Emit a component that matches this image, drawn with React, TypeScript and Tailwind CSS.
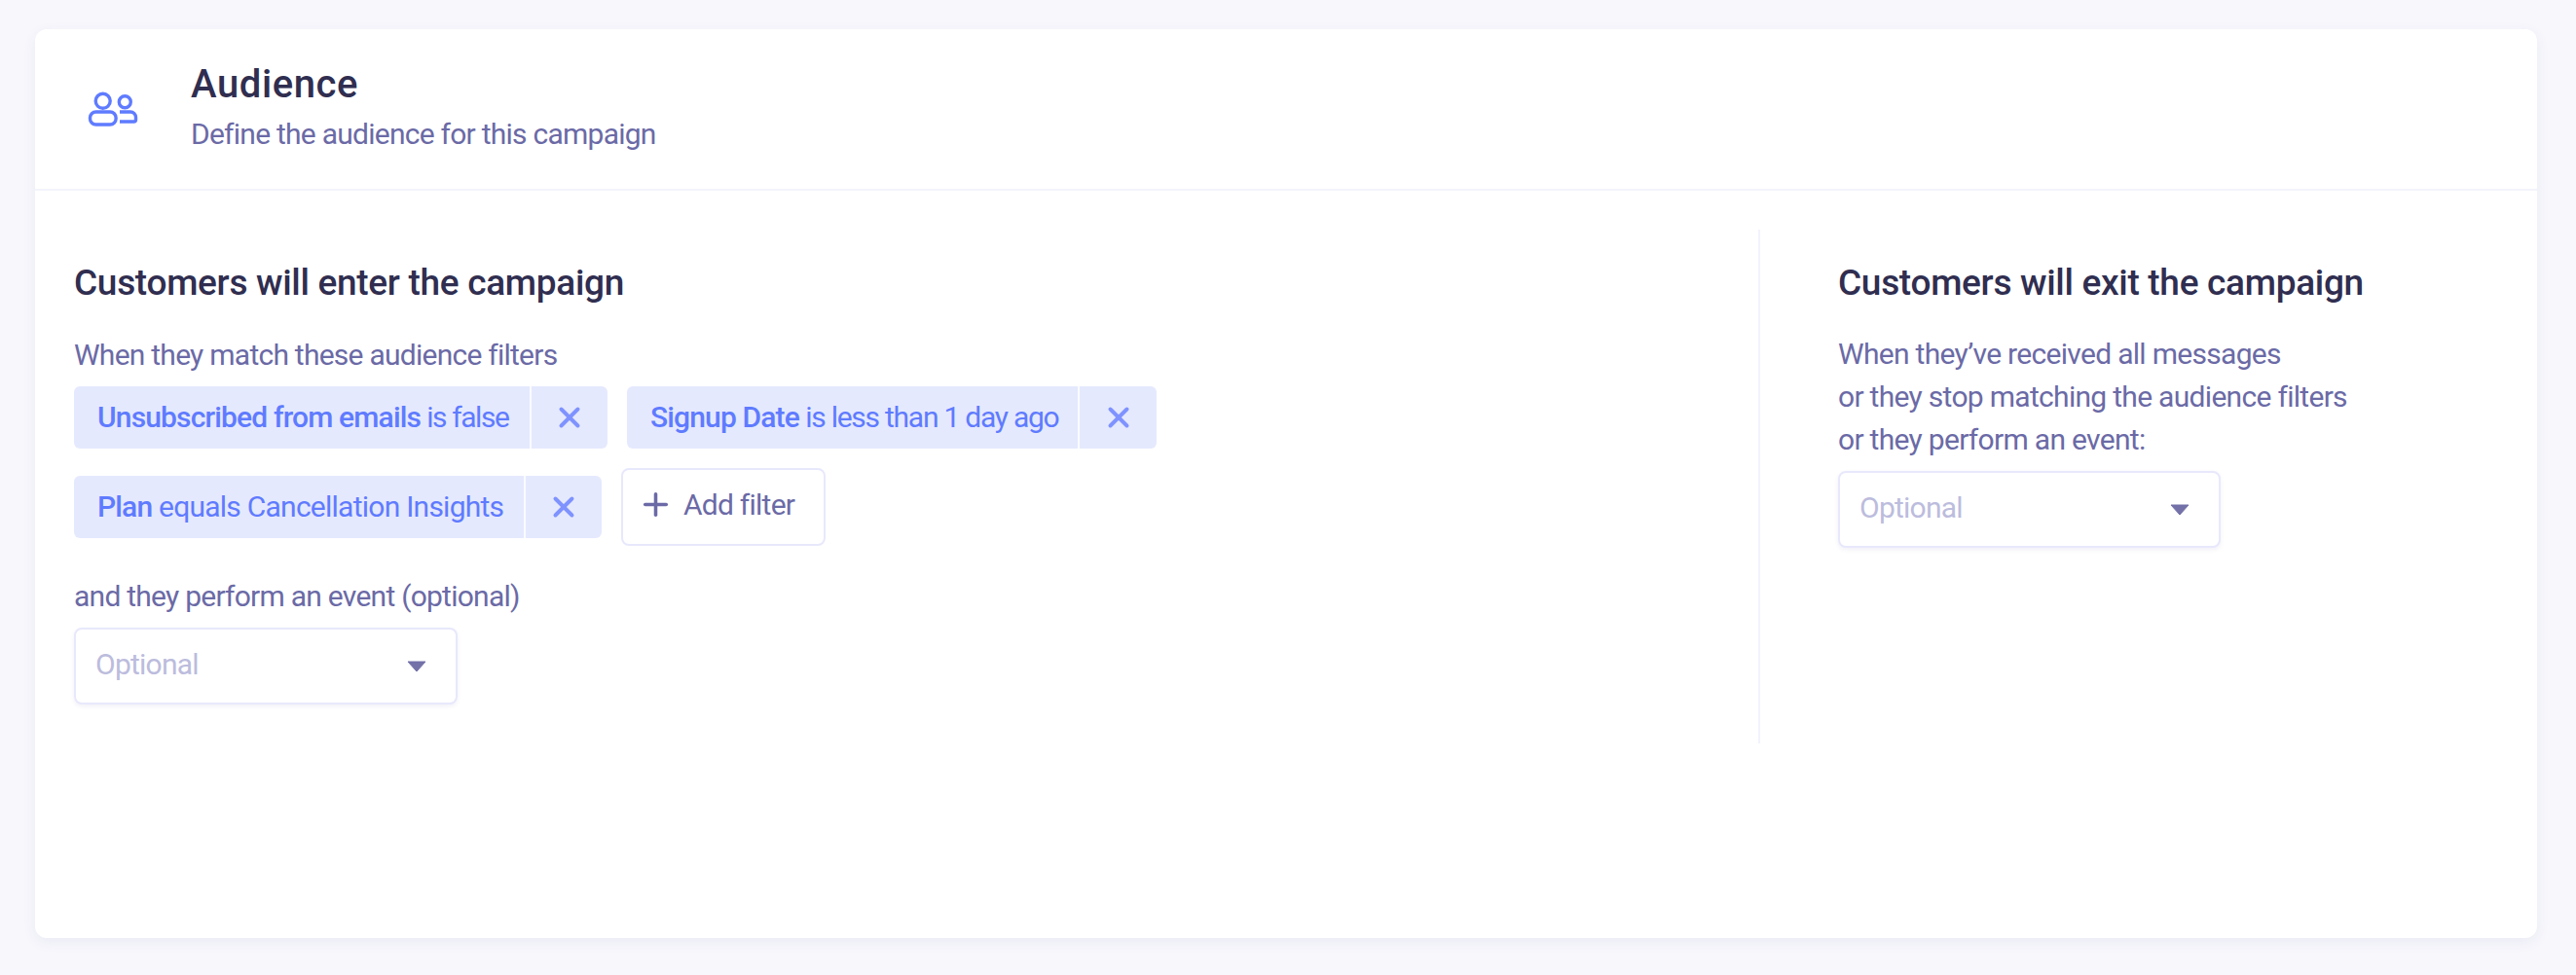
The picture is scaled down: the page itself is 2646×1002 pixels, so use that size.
import { X, Plus } from 'lucide-react';

function Chip({ name, rest, textClass, closeClass }: { name: string; rest: string; textClass: string; closeClass: string }) {
  return (
    <div className="flex h-16 items-stretch rounded-md bg-[#e5e9fe] text-[#5f7bff]">
      <div className={`flex items-center whitespace-nowrap border-r-2 border-white/80 pb-[2px] pl-6 ${textClass}`}>
        <span className="font-medium tracking-[-0.85px]">{name}</span>
        <span>&nbsp;{rest}</span>
      </div>
      <div className={`flex items-center justify-center text-[#7f93ff] ${closeClass}`}>
        <X className="h-[34px] w-[34px]" strokeWidth={2.8} />
      </div>
    </div>
  );
}

function SelectBox() {
  return (
    <div className="flex h-[79px] items-center justify-between rounded-lg border-2 border-[#e8e8fc] bg-white pl-5 pr-[30px] shadow-[0_2px_4px_rgba(80,80,160,0.08)]">
      <span className="pb-1 text-[#bcbcdd]">Optional</span>
      <svg width="20" height="12" viewBox="0 0 20 12">
        <path d="M1 1h18L10 11z" fill="#7371a8" stroke="#7371a8" strokeLinejoin="round" />
      </svg>
    </div>
  );
}

export default function App() {
  return (
    <div
      className="h-[1002px] w-[2646px] overflow-hidden bg-[#f7f7fc] pl-[36px] pt-[30px] text-[30px] tracking-[-0.75px] text-[#6b6aa6]"
      style={{ fontFamily: 'Roboto, "Noto Sans", sans-serif' }}
    >
      <div className="flex h-[934px] w-[2570px] flex-col rounded-xl bg-white shadow-[0_4px_14px_rgba(70,70,140,0.07)]">
        {/* Header */}
        <div className="flex h-[166px] items-center border-b-2 border-[#f3f3fc] pb-[2px]">
          <div className="flex w-[160px] justify-center">
            <svg width="56" height="48" viewBox="0 0 56 48" fill="none" stroke="#5f7bff" strokeWidth="3.4">
              <circle cx="17.700" cy="16.800" r="7.500" />
              <rect x="4.500" y="28" width="26.600" height="13" rx="6" />
              <circle cx="40.300" cy="17.800" r="6" />
              <path d="M35 28h11a5.500 5.500 0 0 1 5.500 5.500v2.500a2 2 0 0 1-2 2H35" />
            </svg>
          </div>
          <div className="flex flex-col">
            <h1 className="-mt-[2px] text-[40px] font-medium leading-[46px] tracking-[0.6px] text-[#302e50]">Audience</h1>
            <p className="mt-[9px] leading-[38px]">Define the audience for this campaign</p>
          </div>
        </div>

        {/* Body */}
        <div className="flex pt-10">
          <div className="flex h-[528px] w-[1772px] flex-col border-r-2 border-[#f3f3fc] pl-10">
            <h2 className="mt-[35px] text-[37px] font-medium leading-[40px] tracking-[-0.3px] text-[#302e50]">
              Customers will enter the campaign
            </h2>
            <p className="mt-[35px] leading-[38px]">When they match these audience filters</p>
            <div className="mt-[13px] flex gap-5">
              <Chip
                name="Unsubscribed from emails"
                rest="is false"
                textClass="w-[470px] tracking-[-1.4px]"
                closeClass="w-[78px]"
              />
              <Chip
                name="Signup Date"
                rest="is less than 1 day ago"
                textClass="w-[465px] tracking-[-1.25px]"
                closeClass="w-[79px]"
              />
            </div>
            <div className="mt-5 flex items-center gap-5">
              <Chip
                name="Plan"
                rest="equals Cancellation Insights"
                textClass="w-[464px]"
                closeClass="w-[78px]"
              />
              <div className="flex h-20 w-[210px] items-center rounded-lg border-2 border-[#e8e8fc] pb-[5px] pl-[15px]">
                <Plus className="h-[37px] w-[37px]" strokeWidth={2.3} />
                <span className="ml-[10px]">Add filter</span>
              </div>
            </div>
            <p className="mt-[33px] leading-[38px]">and they perform an event (optional)</p>
            <div className="mt-[13px] w-[394px]">
              <SelectBox />
            </div>
          </div>

          <div className="flex flex-col pl-[80px]">
            <h2 className="mt-[35px] text-[37px] font-medium leading-[40px] tracking-[-0.3px] text-[#302e50]">
              Customers will exit the campaign
            </h2>
            <div className="mt-[31px] leading-[44px] tracking-[-0.7px]">
              <p>When they’ve received all messages</p>
              <p>or they stop matching the audience filters</p>
              <p>or they perform an event:</p>
            </div>
            <div className="mt-[10px] w-[393px]">
              <SelectBox />
            </div>
          </div>
        </div>
      </div>
    </div>
  );
}
